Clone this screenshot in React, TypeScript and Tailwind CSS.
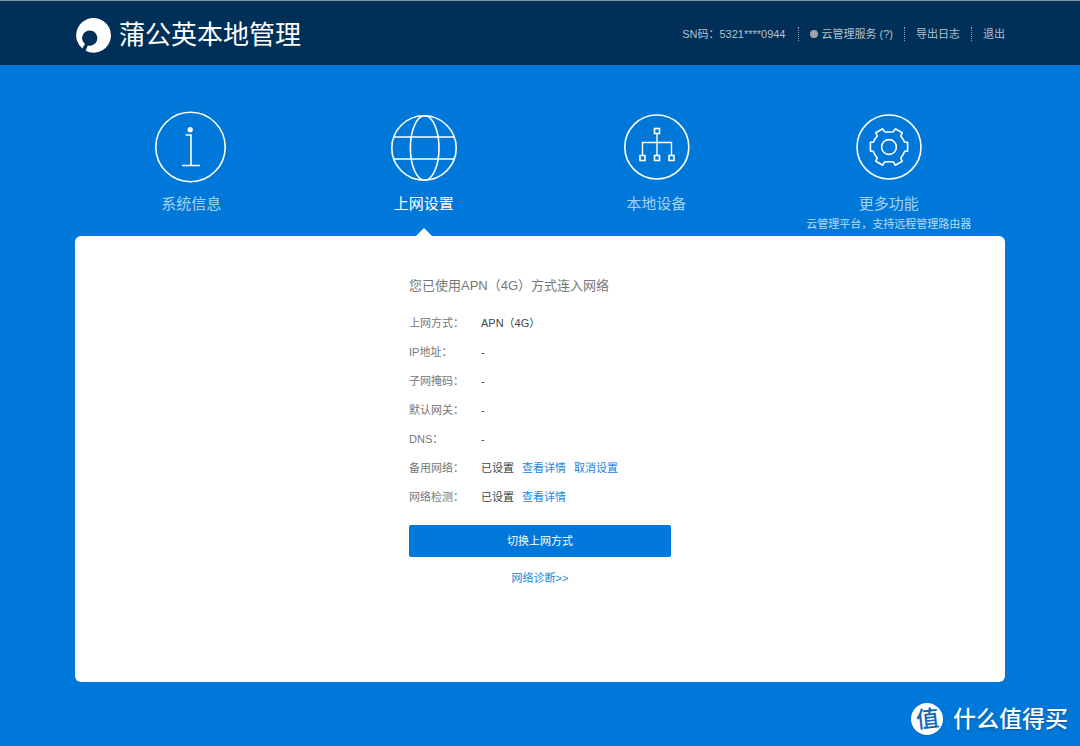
import React, { useState } from 'react';

type TabKey = 'system' | 'network' | 'devices' | 'more';

const InfoIcon: React.FC = () => (
  <svg className="w-[72px] h-[72px]" viewBox="0 0 72 72" fill="none" stroke="currentColor" strokeWidth="1.6">
    <circle cx="35.5" cy="36" r="34.7" />
    <circle cx="35.2" cy="18.7" r="2.6" fill="currentColor" stroke="none" />
    <path d="M30.5 24H36V54M27 54.5H45" />
  </svg>
);

const GlobeIcon: React.FC = () => (
  <svg className="w-[72px] h-[72px]" viewBox="0 0 72 72" fill="none" stroke="currentColor" strokeWidth="1.6">
    <circle cx="36" cy="37" r="32.2" />
    <ellipse cx="36.7" cy="37" rx="14.3" ry="32.2" />
    <path d="M6 26H66M6 48H66" />
  </svg>
);

const DevicesIcon: React.FC = () => (
  <svg className="w-[72px] h-[72px]" viewBox="0 0 72 72" fill="none" stroke="currentColor" strokeWidth="1.6">
    <circle cx="36.8" cy="36" r="32" />
    <rect x="34.5" y="17.5" width="5" height="5" />
    <rect x="20" y="44.5" width="5" height="5" />
    <rect x="34.5" y="44.5" width="5" height="5" />
    <rect x="49" y="44.5" width="5" height="5" />
    <path d="M37 22.5V44.5M22.5 44.5V31.5H51.5V44.5" strokeWidth="1.4" />
  </svg>
);

const GearIcon: React.FC = () => (
  <svg className="w-[72px] h-[72px]" viewBox="0 0 72 72" fill="none" stroke="currentColor" strokeWidth="1.6">
    <circle cx="36" cy="36" r="32" />
    <circle cx="36" cy="36" r="7.4" />
    <path
      strokeLinejoin="round"
      d="M31.5 20.7Q36 21.3 40.5 20.7L42.3 17.8L49.2 21.8L47.7 25Q50.2 28 51.7 31.3H54.6V40.2H51.7Q50.2 44 47.7 47L49.2 50.2L42.3 54.2L40.5 51Q36 50.4 31.5 51L29.7 54.2L22.8 50.2L24.3 47Q21.5 44 20.2 40.2H17.4V31.3H20.2Q21.5 28 24.3 25L22.8 21.8L29.7 17.8Z"
    />
  </svg>
);

const Logo: React.FC = () => (
  <svg className="w-[36px] h-[36px]" viewBox="0 0 36 36">
    <path
      fill="#fff"
      d="M7.2 31.5A17.4 17.4 0 1 1 10.6 33.8L12.8 28.4A7.6 7.6 0 1 0 10 27Z"
    />
  </svg>
);

const tabs: { key: TabKey; label: string; note?: string; icon: React.FC }[] = [
  { key: 'system', label: '系统信息', icon: InfoIcon },
  { key: 'network', label: '上网设置', icon: GlobeIcon },
  { key: 'devices', label: '本地设备', icon: DevicesIcon },
  { key: 'more', label: '更多功能', note: '云管理平台，支持远程管理路由器', icon: GearIcon },
];

const rows: { label: string; value: string; links?: string[] }[] = [
  { label: '上网方式：', value: 'APN（4G）' },
  { label: 'IP地址：', value: '-' },
  { label: '子网掩码：', value: '-' },
  { label: '默认网关：', value: '-' },
  { label: 'DNS：', value: '-' },
  { label: '备用网络：', value: '已设置', links: ['查看详情', '取消设置'] },
  { label: '网络检测：', value: '已设置', links: ['查看详情'] },
];

const App: React.FC = () => {
  const [currentTab, setCurrentTab] = useState<TabKey>('network');

  return (
    <div className="relative min-h-screen bg-[#0078d9] font-['Liberation_Sans','Noto_Sans_CJK_SC',sans-serif]">
      {/* Header */}
      <header className="bg-[#003057] border-t border-[#8596a3]">
        <div className="max-w-[930px] mx-auto h-16 flex items-center justify-between">
          <div className="flex items-center gap-2 pt-1">
            <Logo />
            <h1 className="text-[26px] leading-8 text-white">蒲公英本地管理</h1>
          </div>
          <div className="flex items-center text-[11px] leading-[14px] text-[#b3c1cd] pt-[2px]">
            <span className="pr-3">SN码：5321****0944</span>
            <a href="#cloud" className="flex items-center gap-1 px-[11px] border-l border-dotted border-[#8fa3b3]">
              <span className="w-2 h-2 rounded-full bg-[#a3a3a3]" />
              云管理服务 (?)
            </a>
            <a href="#log" className="px-[11px] border-l border-dotted border-[#8fa3b3]">导出日志</a>
            <a href="#logout" className="pl-[11px] border-l border-dotted border-[#8fa3b3]">退出</a>
          </div>
        </div>
      </header>

      <main className="max-w-[930px] mx-auto pb-16">
        {/* Tabs */}
        <nav className="grid grid-cols-4 h-[171px] pt-[46px]">
          {tabs.map((tab) => {
            const isActive = currentTab === tab.key;
            return (
              <button
                key={tab.key}
                onClick={() => setCurrentTab(tab.key)}
                className="relative flex flex-col items-center text-white cursor-pointer"
              >
                <tab.icon />
                <span className={`mt-[11px] text-[15px] leading-5 ${isActive ? 'text-white' : 'text-[#a6d0f3]'}`}>
                  {tab.label}
                </span>
                {tab.note && <span className="text-[11px] leading-5 text-[#b9dbf6]">{tab.note}</span>}
                {isActive && (
                  <span className="absolute bottom-0 border-x-8 border-b-8 border-x-transparent border-b-white" />
                )}
              </button>
            );
          })}
        </nav>

        {/* Connection panel */}
        <section className="min-h-[446px] rounded-md bg-white pt-10">
          <div className="w-[262px] mx-auto text-[11px] text-[#777]">
            <h2 className="text-[13px] leading-5">您已使用APN（4G）方式连入网络</h2>
            <dl className="mt-[13px] leading-[29px]">
              {rows.map((row) => (
                <div key={row.label} className="flex">
                  <dt className="w-[72px]">{row.label}</dt>
                  <dd className="flex gap-2 text-[#444]">
                    {row.value}
                    {row.links?.map((link) => (
                      <a key={link} href="#detail" className="text-[#1b84dc]">{link}</a>
                    ))}
                  </dd>
                </div>
              ))}
            </dl>
            <button className="mt-[13px] w-full h-8 rounded-xs bg-[#0078d9] text-white cursor-pointer">
              切换上网方式
            </button>
            <a href="#diagnose" className="block mt-[11px] text-center leading-5 text-[#1b84dc]">网络诊断&gt;&gt;</a>
          </div>
        </section>
      </main>

      {/* Site mark */}
      <div className="absolute right-3 bottom-[11px] flex items-center gap-[10px] text-white">
        <span className="w-8 h-8 rounded-full bg-white flex items-center justify-center text-[23px] leading-8 font-medium text-[#1268b3] shadow-sm">
          <span className="-rotate-6">值</span>
        </span>
        <span className="text-[23px] leading-8 font-medium text-shadow-md">什么值得买</span>
      </div>
    </div>
  );
};

export default App;
